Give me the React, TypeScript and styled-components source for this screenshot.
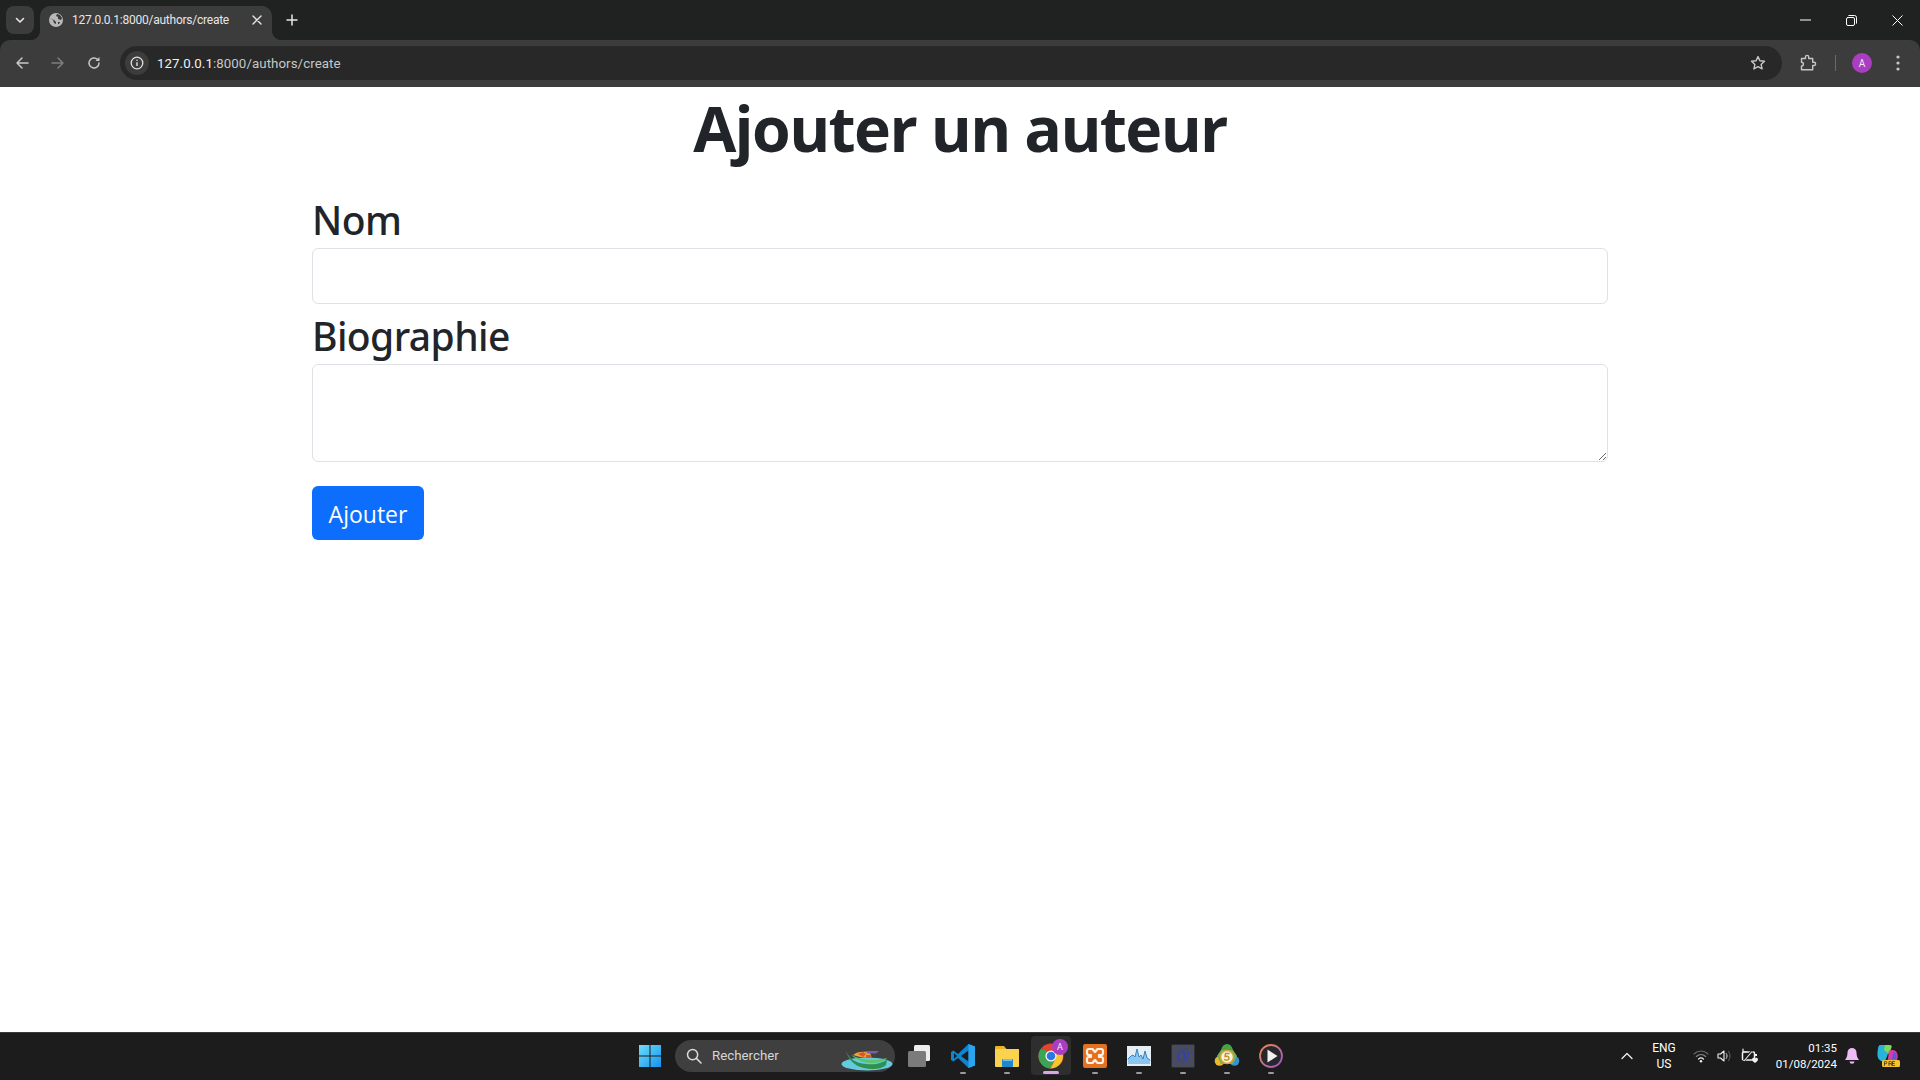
import React from "react";
import styled, { createGlobalStyle } from "styled-components";

const Global = createGlobalStyle`
  html, body { margin: 0; padding: 0; height: 100%; background: #fff; }
  #root { height: 100%; }
  * { box-sizing: border-box; }
`;
const SANS = `"Open Sans", "Noto Sans", "Liberation Sans", sans-serif`;

const Screen = styled.div`
  width: 1920px; height: 1080px; display: flex; flex-direction: column; overflow: hidden; font-family: ${SANS}; background: #202222;
`;
const TitleBar = styled.div`
  height: 40px; background: #202222; display: flex; align-items: flex-start; padding: 6px 0 0 6px; flex: none;
`;
const TabSearch = styled.div`
  width: 28px; height: 28px; border-radius: 8px; background: #3c3c3c; display: flex; align-items: center; justify-content: center;
`;
const Tab = styled.div`
  position: relative; width: 232px; height: 34px; margin-left: 6px; background: #3c3c3c; border-radius: 10px 10px 0 0;
  display: flex; align-items: center; padding: 0 9px 6px 9px; color: #e6e6e6; font-size: 12px; font-family: Roboto, sans-serif;
  &::before, &::after { content: ""; position: absolute; bottom: 0; width: 10px; height: 10px; }
  &::before { left: -10px; background: radial-gradient(circle at 0 0, transparent 10px, #3c3c3c 10.5px); }
  &::after { right: -10px; background: radial-gradient(circle at 100% 0, transparent 10px, #3c3c3c 10.5px); }
`;
const TabTitle = styled.span`
  margin-left: 9px; flex: 1; white-space: nowrap; letter-spacing: -0.02em;
`;
const NewTab = styled.div`
  margin: 2px 0 0 8px; width: 24px; height: 24px; display: flex; align-items: center; justify-content: center;
`;
const WindowControls = styled.div`
  margin-left: auto; display: flex; align-items: center; height: 28px; margin-top: 0;
`;
const WindowButton = styled.div`
  width: 46px; height: 28px; display: flex; align-items: center; justify-content: center;
`;
const Toolbar = styled.div`
  height: 47px; flex: none; background: #3c3c3c; border-radius: 10px 10px 0 0; display: flex; align-items: center; padding: 0 0 1px 4px;
`;
const NavButton = styled.div`
  width: 36px; height: 34px; display: flex; align-items: center; justify-content: center;
`;
const Omnibox = styled.div`
  width: 1662px; margin-left: 8px; height: 34px; border-radius: 17px; background: #282828; display: flex; align-items: center; padding: 0 0 0 5px;
  flex: none;
`;
const InfoChip = styled.div`
  width: 24px; height: 24px; border-radius: 50%; background: #3c3c3c; display: flex; align-items: center; justify-content: center; flex: none;
`;
const Url = styled.div`
  margin-left: 8px; color: #c7c7c7; font: 13.3px Roboto, sans-serif; flex: 1; letter-spacing: 0.005em;
  b { font-weight: 400; color: #f0f0f0; }
`;
const StarSlot = styled.div`
  width: 34px; height: 34px; margin-right: 7px; display: flex; align-items: center; justify-content: center;
`;
const ToolIcon = styled.div`
  width: 36px; height: 34px; display: flex; align-items: center; justify-content: center; flex: none;
`;
const PuzzleSlot = styled(ToolIcon)`
  margin-left: 8px;
`;
const ToolSep = styled.div`
  width: 1px; height: 16px; background: #6a6a6a; margin: 0 8px 0 9px; flex: none;
`;
const Avatar = styled.div`
  width: 20px; height: 20px; border-radius: 50%; background: #a93fc0; color: #f3e7f6; font: 10px Roboto, sans-serif;
  display: flex; align-items: center; justify-content: center;
`;

const Page = styled.main`
  flex: 1; background: #fff; color: #212529; min-height: 0;
`;
const Container = styled.div`
  width: 1296px; margin: 0 auto;
`;
const Title = styled.h1`
  margin: 0 0 24px; text-align: center; font-size: 62.5px; line-height: 82px; font-weight: 700; letter-spacing: -0.026em;
`;
const Label = styled.label`
  display: block; font-family: "Noto Sans", ${SANS}; font-size: 39px; line-height: 53px; height: 53px; margin-bottom: 2px; font-weight: 500; letter-spacing: -0.015em;
`;
const Input = styled.input`
  display: block; width: 100%; height: 56px; border: 1px solid #dee2e6; border-radius: 6px; background: #fff; padding: 0; margin-bottom: 5px;
`;
const TextArea = styled.textarea`
  display: block; width: 100%; height: 98px; border: 1px solid #dee2e6; border-radius: 6px; background: #fff; padding: 0; margin: 0 0 24px;
`;
const Submit = styled.button`
  display: block; width: 112px; height: 54px; border: 0; border-radius: 6px; background: #0d6efd; color: #fff; font: 23px ${SANS}; padding: 2px 0 0;
`;

const Taskbar = styled.footer`
  height: 48px; flex: none; background: #1c1c1c; border-top: 1px solid #3a3a3a; display: flex; align-items: center; padding: 0 11px 2px 628px;
`;
const TaskSlot = styled.div<{ $active?: boolean }>`
  position: relative; width: ${p => (p.$active ? "40px" : "44px")}; margin: 0 ${p => (p.$active ? "2px" : "0")}; height: 39px; flex: none;
  display: flex; align-items: center; justify-content: center; border-radius: 4px;
  background: ${p => (p.$active ? "#2e2e2e" : "transparent")};
`;
const RunDot = styled.span<{ $active?: boolean }>`
  position: absolute; bottom: 1px; left: 50%; transform: translateX(-50%); height: ${p => (p.$active ? "3px" : "2px")}; border-radius: 2px;
  width: ${p => (p.$active ? "16px" : "6px")}; background: ${p => (p.$active ? "#d9a6e6" : "#9a9a9a")};
`;
const SearchPill = styled.div`
  position: relative; width: 220px; height: 32px; margin: 0 2px 0 3px; border-radius: 16px; background: #3f3f3f; display: flex; align-items: center; padding-left: 11px;
  color: #d6d6d6; font-size: 13.3px; font-family: Roboto, sans-serif; flex: none;
`;
const SearchText = styled.span`
  margin-left: 10px;
`;
const BoatSlot = styled.span`
  position: absolute; right: 2px; top: 10px; line-height: 0;
`;
const Tray = styled.div`
  margin-left: auto; display: flex; align-items: center; height: 100%; color: #fff; font: 11.5px Roboto, sans-serif;
`;
const TrayIcon = styled.div<{ $w: number }>`
  width: ${p => p.$w}px; display: flex; align-items: center; justify-content: center; flex: none;
`;
const Lang = styled.div`
  width: 50px; text-align: center; line-height: 16px; font-size: 12px;
`;
const Clock = styled.div`
  width: 75px; text-align: right; line-height: 16px;
`;

const S = { fill: "none", strokeLinecap: "round" as const, strokeLinejoin: "round" as const };

const Chevron = () => (
  <svg width="12" height="12" viewBox="0 0 12 12"><path d="M2.5 4.5 6 8l3.5-3.5" {...S} stroke="#e6e6e6" strokeWidth="1.6" /></svg>
);
const Globe = () => (
  <svg width="14" height="14" viewBox="0 0 14 14">
    <circle cx="7" cy="7" r="7" fill="#b8b8b8" />
    <path d="M1 5l3 2 1 3 2 1V9L5 7 3 6zM8 1l-1 2 2 1 0 2 3 1 1-2-2-3zM9 9l2 0-1 2-1 0z" fill="#3c3c3c" />
  </svg>
);
const CloseX = () => (
  <svg width="12" height="12" viewBox="0 0 12 12"><path d="M2 2l8 8M10 2l-8 8" {...S} stroke="#e6e6e6" strokeWidth="1.4" /></svg>
);
const Plus = () => (
  <svg width="12" height="12" viewBox="0 0 12 12"><path d="M6 1v10M1 6h10" {...S} stroke="#e6e6e6" strokeWidth="1.5" /></svg>
);
const Back = ({ c = "#c7c7c7" }: { c?: string }) => (
  <svg width="14" height="14" viewBox="0 0 14 14"><path d="M13 7H2M7 2 2 7l5 5" {...S} stroke={c} strokeWidth="1.5" /></svg>
);
const Forward = () => (
  <svg width="14" height="14" viewBox="0 0 14 14"><path d="M1 7h11M7 2l5 5-5 5" {...S} stroke="#7d7d7d" strokeWidth="1.5" /></svg>
);
const Reload = () => (
  <svg width="14" height="14" viewBox="0 0 14 14">
    <path d="M12 7a5 5 0 1 1-1.6-3.7" {...S} stroke="#c7c7c7" strokeWidth="1.5" />
    <path d="M12.5 1v4h-4z" fill="#c7c7c7" />
  </svg>
);
const Info = () => (
  <svg width="14" height="14" viewBox="0 0 14 14">
    <circle cx="7" cy="7" r="5.8" {...S} stroke="#e0e0e0" strokeWidth="1.3" />
    <path d="M7 6.3V10" stroke="#e0e0e0" strokeWidth="1.4" /><circle cx="7" cy="4.3" r=".8" fill="#e0e0e0" />
  </svg>
);
const Star = () => (
  <svg width="16" height="16" viewBox="0 0 16 16">
    <path d="M8 1.6l1.9 4.2 4.6.5-3.4 3.1 1 4.5L8 11.6l-4.1 2.3 1-4.5L1.5 6.3l4.6-.5z" {...S} stroke="#c7c7c7" strokeWidth="1.4" />
  </svg>
);
const Puzzle = () => (
  <svg width="18" height="18" viewBox="0 0 18 18">
    <path d="M2.5 4.5h4V3a1.6 1.6 0 0 1 3.2 0v1.5h4v3.800H15a1.600 1.600 0 0 1 0 3.200h-1.300v4.200H2.500V12a1.900 1.900 0 0 0 0-3.800z" {...S} stroke="#c7c7c7" strokeWidth="1.4" />
  </svg>
);
const Dots = () => (
  <svg width="4" height="16" viewBox="0 0 4 16"><circle cx="2" cy="2" r="1.6" fill="#c7c7c7" /><circle cx="2" cy="8" r="1.6" fill="#c7c7c7" /><circle cx="2" cy="14" r="1.6" fill="#c7c7c7" /></svg>
);
const Minimize = () => (
  <svg width="11" height="2" viewBox="0 0 11 2"><path d="M0 1h11" stroke="#fff" strokeWidth="1" /></svg>
);
const Restore = () => (
  <svg width="11" height="11" viewBox="0 0 11 11">
    <rect x=".5" y="2.5" width="8" height="8" rx="1.5" {...S} stroke="#fff" />
    <path d="M2.8.5h5.7a2 2 0 0 1 2 2v5.7" {...S} stroke="#fff" />
  </svg>
);
const WinClose = () => (
  <svg width="11" height="11" viewBox="0 0 11 11"><path d="M.5.5l10 10M10.5.5l-10 10" stroke="#fff" strokeWidth="1" /></svg>
);

const WinLogo = () => (
  <svg width="24" height="24" viewBox="0 0 24 24">
    <defs><linearGradient id="w" x1="0" y1="0" x2="1" y2="1"><stop offset="0" stopColor="#6fdcf8" /><stop offset="1" stopColor="#1593f0" /></linearGradient></defs>
    <path d="M1 1h10.5v10.5H1zM12.5 1H23v10.5H12.5zM1 12.5h10.5V23H1zM12.5 12.5H23V23H12.5z" fill="url(#w)" />
  </svg>
);
const SearchGlass = () => (
  <svg width="16" height="16" viewBox="0 0 16 16"><circle cx="6.6" cy="6.6" r="5.1" {...S} stroke="#dcdcdc" strokeWidth="1.5" /><path d="M10.4 10.4l4.6 4.6" {...S} stroke="#dcdcdc" strokeWidth="1.5" /></svg>
);
const Boat = () => (
  <svg width="52" height="21" viewBox="0 0 52 21">
    <ellipse cx="26" cy="14" rx="25.500" ry="6.500" fill="#63cbdc" />
    <path d="M5 1c4 8 9 12 20 13 9 1 18-1 21-5l-1 6c-4 4-13 5-22 3C13 16 7 9 5 1z" fill="#2f8f4e" />
    <path d="M10 5c6 3 14 5 22 5 5 0 10-1 14-2-2 3-9 5-16 5-7 0-14-3-20-8z" fill="#5cc46a" />
    <path d="M12 5c3-3 9-4 14-3 3 .5 5 3 4 6-6 0-13-1-18-3z" fill="#e8a53a" />
    <path d="M17 4l5-2 3 2-3 3zM25 5l5 0 1 3-6 0z" fill="#d9562e" />
    <path d="M23 1h15l-3 2.500H27z" fill="#7a5db0" />
  </svg>
);
const TaskView = () => (
  <svg width="24" height="24" viewBox="0 0 24 24"><rect x="7" y="1" width="16" height="16" rx="1.5" fill="#ededed" /><rect x="1" y="7" width="18" height="16" rx="1.5" fill="#7b7b7b" /></svg>
);
const VSCode = () => (
  <svg width="26" height="26" viewBox="0 0 26 26">
    <path d="M18.5 1 8 11 3.5 7.5 1 9v8l2.500 1.500L8 15l10.500 10 6.500-2.500V3.500z" fill="#0f84d0" />
    <path d="M18.500 7.500 11 13l7.500 5.500z" fill="#1c1c1c" /><path d="M4 10v6l3-3z" fill="#1c1c1c" />
    <path d="M18.500 1 25 3.500v19L18.500 25z" fill="#2aa4ee" />
  </svg>
);
const Folder = () => (
  <svg width="26" height="24" viewBox="0 0 26 24">
    <path d="M1 3a1 1 0 0 1 1-1h8l2.500 3H25v4H1z" fill="#e9b126" />
    <rect x="1" y="5" width="24" height="18" rx="1" fill="#fbd24d" />
    <rect x="8" y="15" width="11" height="8" rx="1" fill="#1f86d0" /><rect x="9" y="15" width="9" height="2" fill="#6fc0ee" />
  </svg>
);
const Chrome = () => (
  <svg width="26" height="26" viewBox="0 0 26 26">
    <circle cx="13" cy="13" r="12.500" fill="#e5432f" />
    <path d="M13 13 2.200 19.200A12.500 12.500 0 0 1 2.200 6.800L7 7z" fill="#3aa655" />
    <path d="M2.200 19.200 13 13l4.500 2-5 10.500A12.500 12.500 0 0 1 2.200 19.200z" fill="#3aa655" />
    <path d="M13 8h11A12.500 12.500 0 0 1 12.500 25.500L18 15z" fill="#f7c52b" />
    <circle cx="13" cy="13" r="5.600" fill="#f5f5f5" /><circle cx="13" cy="13" r="4.300" fill="#2b78e4" />
  </svg>
);
const ChromeBadge = styled.span`
  position: absolute; right: 3px; top: 3px; width: 16px; height: 16px; border-radius: 50%; background: #a93fc0; color: #f3e7f6; font: 9px Roboto, sans-serif;
  display: flex; align-items: center; justify-content: center;
`;
const Xampp = () => (
  <svg width="24" height="24" viewBox="0 0 24 24">
    <rect width="24" height="24" rx="2" fill="#e4711f" />
    <path d="M6 5h3.500L12 8l2.500-3H18a2 2 0 0 1 2 2v2a2 2 0 0 1-2 2h-2v2h2a2 2 0 0 1 2 2v2a2 2 0 0 1-2 2h-3.500L12 16l-2.500 3H6a2 2 0 0 1-2-2v-2a2 2 0 0 1 2-2h2v-2H6a2 2 0 0 1-2-2V7a2 2 0 0 1 2-2z" {...S} stroke="#fdf0e4" strokeWidth="2.200" />
  </svg>
);
const Monitor = () => (
  <svg width="24" height="20" viewBox="0 0 24 20">
    <rect width="24" height="20" fill="#e6eef5" />
    <path d="M1 18V13l3-3 2-1 2 2 2-8 2 8 2-2 2 4 2-8 2 7 3 2v4z" fill="#8cc6ec" />
    <path d="M1 13l3-3 2-1 2 2 2-8 2 8 2-2 2 4 2-8 2 7 3 2" {...S} stroke="#2f83c8" />
  </svg>
);
const DarkApp = () => (
  <svg width="24" height="24" viewBox="0 0 24 24">
    <rect width="24" height="24" fill="#4a4b5c" /><rect width="24" height="24" fill="none" stroke="#111" />
    <path d="M16 5c-5 0-9 3-9 8 0 3 3 5 6 5M12 8c2 1 3 4 1 7M17 8c1 3 0 6-2 9" {...S} stroke="#2a3fc8" strokeWidth="1.200" />
  </svg>
);
const Mt5 = () => (
  <svg width="26" height="26" viewBox="0 0 26 26">
    <path d="M13 1c3 0 5 2 6 6H7c1-4 3-6 6-6z" fill="#47a34a" />
    <circle cx="5.500" cy="18" r="4.800" fill="#e9b82f" /><circle cx="20.500" cy="18" r="4.800" fill="#3a8fd0" />
    <path d="M3 13l4-6h12l4 6-4 8H7z" fill="#6fb25a" />
    <circle cx="13" cy="14" r="6.500" fill="#f6f1e4" stroke="#d5a42b" strokeWidth="1.500" />
    <path d="M15 10.500h-3.500l-.5 3c2-.8 4 0 4 1.800 0 2-3 2.500-4.500 1.200" {...S} stroke="#c78f1c" strokeWidth="1.500" />
  </svg>
);
const Player = () => (
  <svg width="24" height="24" viewBox="0 0 24 24">
    <defs><linearGradient id="p" x1="0" y1="0" x2="1" y2="1"><stop offset="0" stopColor="#e88a4a" /><stop offset="1" stopColor="#9a55c8" /></linearGradient></defs>
    <circle cx="12" cy="12" r="11" fill="#26262c" stroke="url(#p)" strokeWidth="1.800" />
    <path d="M8.500 5.500v13l10-6.500z" fill="#f0f0f0" />
  </svg>
);
const Caret = () => (
  <svg width="12" height="8" viewBox="0 0 12 8"><path d="M1 6.500 6 1.500l5 5" {...S} stroke="#f0f0f0" strokeWidth="1.300" /></svg>
);
const Wifi = () => (
  <svg width="16" height="14" viewBox="0 0 16 14">
    <path d="M1 5c4-4 10-4 14 0" {...S} stroke="#6a6a6a" strokeWidth="1.100" />
    <path d="M3.300 7.500c2.800-2.600 6.600-2.600 9.400 0" {...S} stroke="#8a8a8a" strokeWidth="1.100" />
    <path d="M5.600 10c1.500-1.300 3.300-1.300 4.800 0" {...S} stroke="#f0f0f0" strokeWidth="1.200" />
    <circle cx="8" cy="12.300" r="1.200" fill="#f0f0f0" />
  </svg>
);
const Speaker = () => (
  <svg width="16" height="16" viewBox="0 0 16 16">
    <path d="M1 6v4h2.500L7 13V3L3.500 6z" {...S} stroke="#f0f0f0" strokeWidth="1.100" />
    <path d="M9.200 5.500c1.200 1.500 1.200 3.500 0 5" {...S} stroke="#e0e0e0" strokeWidth="1" />
    <path d="M11.500 3.500c2 2.500 2 6.500 0 9" {...S} stroke="#6a6a6a" strokeWidth="1" />
  </svg>
);
const SyncBattery = () => (
  <svg width="18" height="16" viewBox="0 0 18 16">
    <rect x="1.500" y="4" width="12" height="8" rx="1" {...S} stroke="#f0f0f0" strokeWidth="1.500" />
    <path d="M3 12.500 11 3" stroke="#1c1c1c" strokeWidth="2.500" />
    <path d="M3 13 11 3.500" stroke="#f0f0f0" strokeWidth="1.100" />
    <path d="M2 1v3h3" {...S} stroke="#f0f0f0" strokeWidth="1.200" />
    <path d="M11 11.500c0-1.700 2.400-2.300 3-1 .6-1.300 3-.7 3 1 0 1.500-1.800 2.700-3 3.500-1.200-.8-3-2-3-3.500z" fill="#f0f0f0" />
    <path d="M14 6h2v2h-2z" fill="#f0f0f0" />
  </svg>
);
const Bell = () => (
  <svg width="14" height="16" viewBox="0 0 14 16"><path d="M7 0a4.500 4.500 0 0 1 4.500 4.500c0 3 .7 5 2.500 7.500H0c1.800-2.500 2.500-4.500 2.500-7.500A4.500 4.500 0 0 1 7 0z" fill="#eebcf5" /><path d="M4.500 13.500h5A2.500 2.500 0 0 1 7 15.800a2.500 2.500 0 0 1-2.500-2.300z" fill="#eebcf5" /></svg>
);
const Copilot = () => (
  <svg width="24" height="26" viewBox="0 0 24 26">
    <path d="M4 2h8c3 0 2 3 1 6l-3 8c-1 2-3 3-5 2-4-2-4-7-3-12 0-2 1-4 2-4z" fill="#27b4d8" />
    <path d="M9 2h5c2 0 2 2 1 4l-2 5-5-4z" fill="#7ed957" />
    <path d="M13 8c3-2 7-1 8 2 1 3 1 6-1 8H11c2-3 1-7 2-10z" fill="#d83ea8" />
    <path d="M17 9c3 0 4 3 3 7l-4 1z" fill="#5a57d8" />
    <rect x="6" y="17" width="18" height="7" rx="1.500" fill="#f4c430" />
    <path d="M8.500 22.500v-4h1.300a1 1 0 0 1 0 2.200H8.500M13 22.500v-4h1.500a1 1 0 0 1 0 2.200H13M15 20.700l.7 1.800M18.500 18.500h-2v4h2M16.500 20.500h1.700" {...S} stroke="#222" strokeWidth=".7" />
  </svg>
);

export default function App() {
  return (
    <Screen>
      <Global />
      <TitleBar>
        <TabSearch><Chevron /></TabSearch>
        <Tab>
          <Globe />
          <TabTitle>127.0.0.1:8000/authors/create</TabTitle>
          <CloseX />
        </Tab>
        <NewTab><Plus /></NewTab>
        <WindowControls>
          <WindowButton><Minimize /></WindowButton>
          <WindowButton><Restore /></WindowButton>
          <WindowButton><WinClose /></WindowButton>
        </WindowControls>
      </TitleBar>
      <Toolbar>
        <NavButton><Back /></NavButton>
        <NavButton><Forward /></NavButton>
        <NavButton><Reload /></NavButton>
        <Omnibox>
          <InfoChip><Info /></InfoChip>
          <Url><b>127.0.0.1</b>:8000/authors/create</Url>
          <StarSlot><Star /></StarSlot>
        </Omnibox>
        <PuzzleSlot><Puzzle /></PuzzleSlot>
        <ToolSep />
        <ToolIcon><Avatar>A</Avatar></ToolIcon>
        <ToolIcon><Dots /></ToolIcon>
      </Toolbar>
      <Page>
        <Container>
          <Title>Ajouter un auteur</Title>
          <Label htmlFor="nom">Nom</Label>
          <Input id="nom" />
          <Label htmlFor="bio">Biographie</Label>
          <TextArea id="bio" />
          <Submit>Ajouter</Submit>
        </Container>
      </Page>
      <Taskbar>
        <TaskSlot><WinLogo /></TaskSlot>
        <SearchPill>
          <SearchGlass />
          <SearchText>Rechercher</SearchText>
          <BoatSlot><Boat /></BoatSlot>
        </SearchPill>
        <TaskSlot><TaskView /></TaskSlot>
        <TaskSlot><VSCode /><RunDot /></TaskSlot>
        <TaskSlot><Folder /><RunDot /></TaskSlot>
        <TaskSlot $active><Chrome /><ChromeBadge>A</ChromeBadge><RunDot $active /></TaskSlot>
        <TaskSlot><Xampp /><RunDot /></TaskSlot>
        <TaskSlot><Monitor /><RunDot /></TaskSlot>
        <TaskSlot><DarkApp /><RunDot /></TaskSlot>
        <TaskSlot><Mt5 /><RunDot /></TaskSlot>
        <TaskSlot><Player /><RunDot /></TaskSlot>
        <Tray>
          <TrayIcon $w={24}><Caret /></TrayIcon>
          <Lang>ENG<br />US</Lang>
          <TrayIcon $w={24}><Wifi /></TrayIcon>
          <TrayIcon $w={24}><Speaker /></TrayIcon>
          <TrayIcon $w={25}><SyncBattery /></TrayIcon>
          <Clock>01:35<br />01/08/2024</Clock>
          <TrayIcon $w={30}><Bell /></TrayIcon>
          <TrayIcon $w={42}><Copilot /></TrayIcon>
        </Tray>
      </Taskbar>
    </Screen>
  );
}
